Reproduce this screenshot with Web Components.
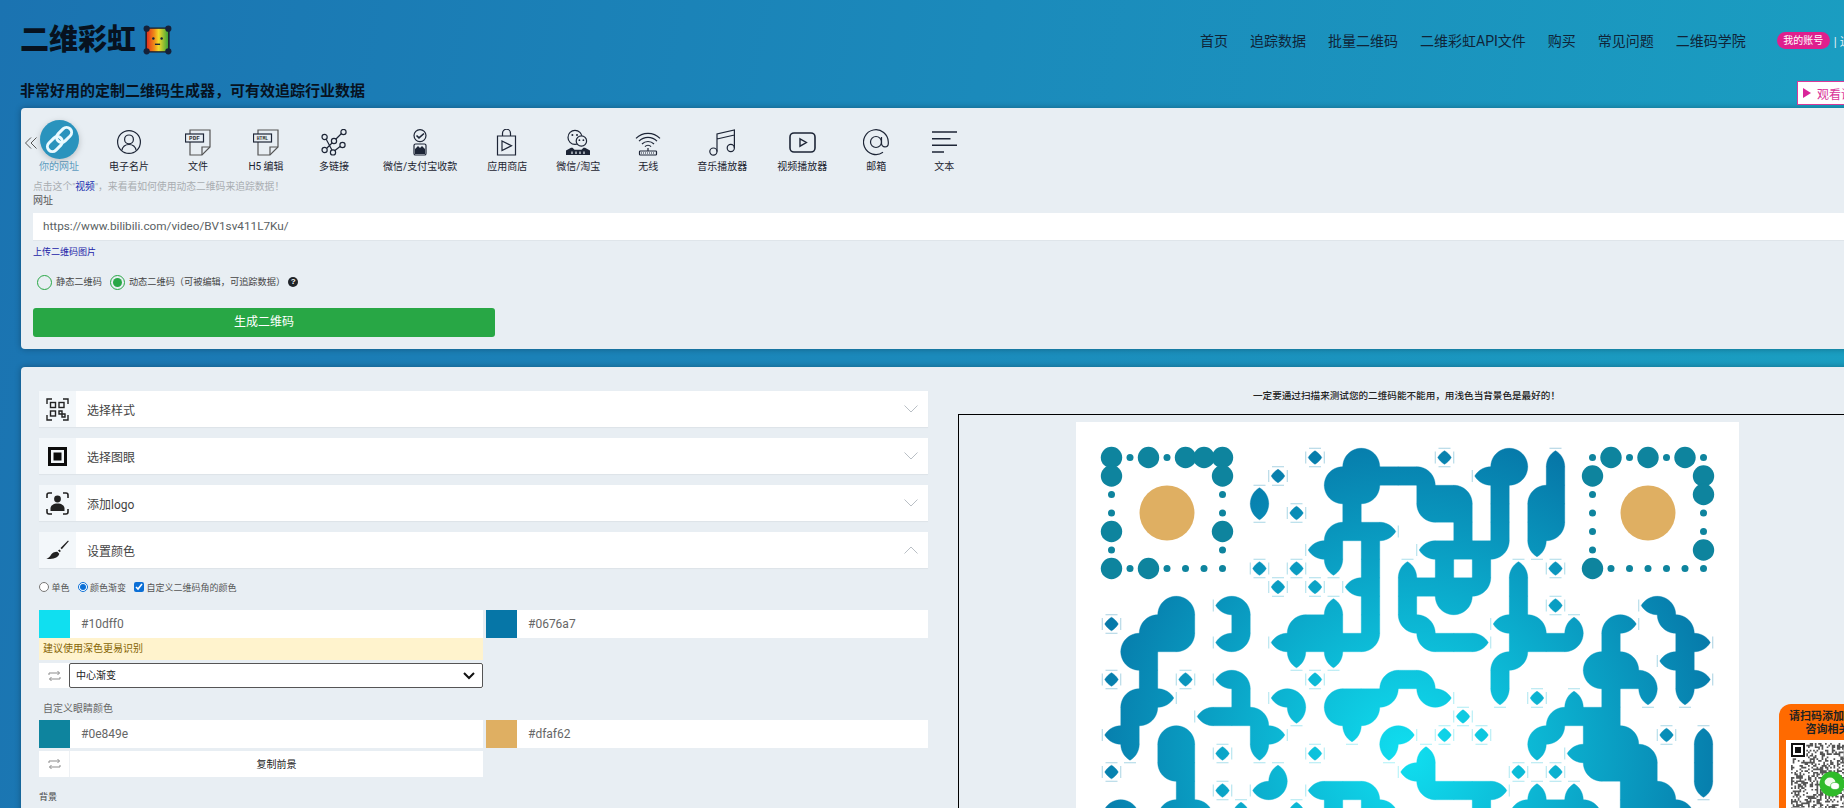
<!DOCTYPE html>
<html lang="zh">
<head>
<meta charset="utf-8">
<title>二维彩虹</title>
<style>
  html, body { margin: 0; height: 808px; overflow: hidden; }
  body {
    width: 1844px;
    font-family: Roboto, "Noto Sans CJK SC", sans-serif;
    background: linear-gradient(100deg, #1b73b1 0%, #1b8abb 50%, #1aa0c2 100%);
  }
</style>
</head>
<body>
<qr-page></qr-page>

<script>
const INK = "#1d2536";

// link type icons, in the order of the tab bar
const TAB_ICONS = {
  person: `<circle cx="13" cy="13" r="11.4"/><circle cx="13" cy="10.4" r="4.4"/><path d="M5.8 21.5c.8-3.8 3.4-6 7.2-6s6.4 2.2 7.2 6"/>`,
  pdf: `<path stroke="#555" d="M5 5V1h20v17l-8 8H5V13"/><path stroke="#555" d="M25 18h-8v8"/><rect x=".5" y="5" width="18" height="8" fill="#e8eef3"/><text x="9.5" y="11.2" font-size="6" font-weight="700" text-anchor="middle" fill="#333" stroke="none" font-family="Liberation Mono">PDF</text>`,
  html: `<path stroke="#555" d="M5 5V1h20v17l-8 8H5V13"/><path stroke="#555" d="M25 18h-8v8"/><rect x=".5" y="5" width="18" height="8" fill="#e8eef3"/><text x="9.5" y="11" font-size="4.8" font-weight="700" text-anchor="middle" fill="#333" stroke="none" font-family="Liberation Mono">HTML</text>`,
  graph: `<path d="M4 8l8 15M4 21l9-9 9-9M12 23l9-7"/><g fill="#e8eef3"><circle cx="22.5" cy="3" r="2.6"/><circle cx="21.5" cy="16" r="2.6"/><circle cx="13" cy="12" r="2.6"/><circle cx="3.6" cy="8" r="2.6"/><circle cx="3.6" cy="21" r="2.6"/><circle cx="12" cy="23.4" r="2.6"/></g>`,
  pay: `<circle cx="13" cy="6.6" r="6"/><path stroke-width="1.6" d="M9.5 6.5l2.5 2.4 5-4.4"/><rect x="7" y="15" width="12" height="11" rx="1.6"/><path fill="${INK}" stroke="none" d="M8 20l3-3 2 2 2-2 3 3v5H8z"/>`,
  store: `<path d="M3.5 7h18v19h-18zM8.5 7V4.2a4 4 0 0 1 8 0V7M8 12l9.5 4.8L8 21.5z"/>`,
  wechat: `<circle cx="10" cy="8.4" r="7"/><circle cx="16.4" cy="12" r="5.2" fill="#e8eef3"/><g fill="${INK}" stroke="none"><circle cx="7.4" cy="6" r="1"/><circle cx="12" cy="6" r="1"/><circle cx="14.4" cy="11.2" r=".9"/><circle cx="18.4" cy="11.2" r=".9"/><path d="M1 26v-4.6l5-2.6h1.5l2 2h7l2-2H20l5 2.6V26z"/></g><path stroke="#e8eef3" stroke-width="1.2" d="M7 25v-2.6M11 25v-2.6M15 25v-2.6M19 25v-2.6"/>`,
  wifi: `<path d="M1 9.4a17 17 0 0 1 24 0M4 12.2a12.6 12.6 0 0 1 18 0M7 15a8.4 8.4 0 0 1 12 0M10 17.6a4 4 0 0 1 6 0M13 19v3"/><rect x="4.5" y="22" width="17" height="4" rx=".8"/><path stroke-width="1" stroke-dasharray="1 1" d="M6 24h14"/>`,
  music: `<circle cx="4.4" cy="22.6" r="3.6"/><circle cx="21.8" cy="19" r="3.6"/><path d="M8 22.6V5L25.4 1v18M8 10L25.4 6"/>`,
  video: `<rect x="1" y="4" width="25" height="19" rx="4" stroke-width="1.6"/><path stroke-width="1.4" d="M11 9.8l6.4 3.7L11 17.2z"/>`,
  at: `<circle cx="13" cy="13" r="5.5"/><path d="M18.5 8v6.4a3.4 3.4 0 0 0 6.8 0V13A12.4 12.4 0 1 0 20 23.3"/>`,
  lines: `<path stroke-width="1.4" d="M1 3h25M1 9.7h18.5M1 16.3h25M1 23h12"/>`,
};

const TABS = [
  ["你的网址", "link"], ["电子名片", "person"], ["文件", "pdf"], ["H5 编辑", "html"],
  ["多链接", "graph"], ["微信/支付宝收款", "pay"], ["应用商店", "store"], ["微信/淘宝", "wechat"],
  ["无线", "wifi"], ["音乐播放器", "music"], ["视频播放器", "video"], ["邮箱", "at"], ["文本", "lines"],
];

class QrHeader extends HTMLElement {
  constructor() {
    super();
    this.attachShadow({ mode: "open" });
    const links = ["首页", "追踪数据", "批量二维码", "二维彩虹API文件", "购买", "常见问题", "二维码学院"];
    this.shadowRoot.innerHTML = `
      <style>
        :host { display: block; height: 108px; padding-left: 20px; color: #0d1b2a; }
        .top { display: flex; align-items: center; height: 80px; }
        .logo { font-size: 29px; font-weight: 900; letter-spacing: 0; color: #07121f; line-height: 1; }
        .bear { margin-left: 6px; }
        nav { display: flex; align-items: center; gap: 22px; position: absolute; left: 1200px; top: 32px; height: 17px; font-size: 14px; color: #0f2438; white-space: nowrap; }
        nav .link { margin-top: -2px; }
        .pill { margin-left: 9px; width: 53px; height: 17px; line-height: 17px; text-align: center; border-radius: 9px; background: #e01f8d; color: #fff; font-size: 10px; }
        .sep { margin-left: -18px; font-size: 12px; color: #e6f2f7; }
        h2 { margin: 0; font-size: 15px; line-height: 22px; font-weight: 700; color: #07121f; }
        .watch {
          position: absolute; left: 1797px; top: 81px; width: 90px; height: 24px; box-sizing: border-box;
          display: flex; align-items: center; gap: 6px; padding-left: 5px;
          background: #fff; border: 1px solid #d93a99; color: #d9349a; font-size: 12px;
        }
        .tri { width: 0; height: 0; border-left: 8px solid #d9259a; border-top: 5px solid transparent; border-bottom: 5px solid transparent; }
      </style>
      <div class="top">
        <span class="logo">二维彩虹</span>
        <svg class="bear" width="31" height="32" viewBox="0 0 30 31">
          <defs><linearGradient id="bear" x1="0" x2="1" y1="0" y2="0">
            <stop offset="0" stop-color="#e0261e"/><stop offset=".35" stop-color="#f08a18"/>
            <stop offset=".55" stop-color="#f3d92a"/><stop offset="1" stop-color="#2fa23a"/>
          </linearGradient></defs>
          <rect x="4" y="4" width="22" height="23" rx="2" fill="url(#bear)" stroke="#1d1a24" stroke-width="1.4"/>
          <g fill="#14213a"><circle cx="4.5" cy="4.5" r="3"/><circle cx="25.5" cy="4.5" r="3"/><circle cx="4.5" cy="26.5" r="3"/><circle cx="25.5" cy="26.5" r="3"/>
          <circle cx="11" cy="14" r="1.2"/><circle cx="19" cy="14" r="1.2"/><rect x="12.5" y="19" width="5" height="1.3"/></g>
        </svg>
        <nav>
          ${links.map((l) => `<span class="link">${l}</span>`).join("")}
          <span class="pill">我的账号</span><span class="sep">| 退出</span>
        </nav>
      </div>
      <h2>非常好用的定制二维码生成器，可有效追踪行业数据</h2>
      <div class="watch"><i class="tri"></i>观看讲解</div>
    `;
  }
}

class LinkTabs extends HTMLElement {
  constructor() {
    super();
    this.attachShadow({ mode: "open" });
    const renderIcon = (name) => {
      if (name === "link") {
        return `<svg class="active" width="39" height="39" viewBox="0 0 39 39"><circle cx="19.5" cy="19.5" r="19.5" fill="#2a93bd"/>
          <g transform="rotate(-45 19.5 19.5)" fill="none" stroke="#eafaff" stroke-width="3"><rect x="4.5" y="14.5" width="17" height="10" rx="5"/><rect x="17.5" y="14.5" width="17" height="10" rx="5"/></g></svg>`;
      }
      return `<svg width="27" height="27" viewBox="0 0 27 27" fill="none" stroke="${INK}" stroke-width="1.2">${TAB_ICONS[name]}</svg>`;
    };
    this.shadowRoot.innerHTML = `
      <style>
        :host { display: flex; position: relative; padding-left: 3px; height: 54px; }
        .tab { flex: none; min-width: 68px; padding: 0 15px; box-sizing: border-box; text-align: center; font-size: 10px; line-height: 14px; color: #1c2430; white-space: nowrap; }
        .tab.tight { padding: 0 14px; }
        .tab.on { color: #5d9cbf; }
        .ic { height: 39px; display: flex; align-items: center; justify-content: center; margin-bottom: 1px; }
        .tab:not(.on) .ic { padding-top: 5px; height: 34px; }
        .active { filter: drop-shadow(0 2px 3px rgba(0,0,0,.2)); }
        .back { position: absolute; left: 3px; top: 16px; }
      </style>
      ${TABS.map(([label, icon], i) => `<div class="tab ${i === 0 ? "on" : ""} ${icon === "wechat" ? "tight" : ""}"><div class="ic">${renderIcon(icon)}</div>${label}</div>`).join("")}
      <svg class="back" width="14" height="14" viewBox="0 0 14 14" fill="none" stroke="#555" stroke-width="1"><path d="M7 1.5L1.5 7 7 12.5M12.5 1.5L7 7l5.5 5.5"/></svg>
    `;
  }
}

class UrlForm extends HTMLElement {
  constructor() {
    super();
    this.attachShadow({ mode: "open" });
    this.shadowRoot.innerHTML = `
      <style>
        :host { display: block; padding-left: 12px; font-size: 10px; line-height: 14px; color: #555; }
        .hint { margin-top: 6px; font-size: 9.8px; color: #a9adb1; }
        .hint b { font-weight: 400; color: #1a2fb0; }
        .input { margin-top: 5px; height: 27px; line-height: 27px; padding-left: 10px; background: #fff; font-size: 11.75px; color: #5a5f63; box-shadow: 0 1px 0 #dfe5ea; }
        .upload { margin-top: 5px; font-size: 9px; color: #1b23a8; }
        .kinds { display: flex; align-items: center; margin-top: 15px; height: 16px; font-size: 9.2px; color: #444; }
        .radio { width: 15px; height: 15px; box-sizing: border-box; border: 1px solid #28a745; border-radius: 50%; margin: 0 4px 0 4px; display: flex; align-items: center; justify-content: center; }
        .radio.on::after { content: ""; width: 9px; height: 9px; border-radius: 50%; background: #28a745; }
        .second { margin-left: 8px; }
        .q { margin-left: 3px; width: 10px; height: 10px; border-radius: 50%; background: #1f2328; color: #fff; font: 700 8px/10px "Liberation Sans", sans-serif; text-align: center; }
        .go { margin-top: 18px; width: 462px; height: 29px; line-height: 29px; background: #28a745; border-radius: 3px; color: #fff; text-align: center; font-size: 12px; }
      </style>
      <div class="hint">点击这个"<b>视频</b>"，来看看如何使用动态二维码来追踪数据！</div>
      <div>网址</div>
      <div class="input">https://www.bilibili.com/video/BV1sv411L7Ku/</div>
      <div class="upload">上传二维码图片</div>
      <div class="kinds">
        <span class="radio"></span>静态二维码
        <span class="radio on second"></span>动态二维码（可被编辑，可追踪数据）<span class="q">?</span>
      </div>
      <div class="go">生成二维码</div>
    `;
  }
}

class AccordionItem extends HTMLElement {
  constructor() {
    super();
    this.attachShadow({ mode: "open" });
    const open = this.hasAttribute("open");
    this.shadowRoot.innerHTML = `
      <style>
        :host { display: flex; align-items: center; height: 36px; margin-bottom: 11px; background: #fff; font-size: 12px; color: #444; box-shadow: 0 1px 1px rgba(0,0,0,.04); }
        .ic { flex: none; width: 37px; height: 100%; display: flex; align-items: center; justify-content: center; background: #f3f7fa; }
        .t { flex: 1; padding-left: 11px; }
        svg { margin-right: 10px; }
      </style>
      <div class="ic"><slot name="icon"></slot></div>
      <div class="t">${this.getAttribute("label")}</div>
      <svg width="14" height="8" viewBox="0 0 14 8" fill="none" stroke="#b9bfc5" stroke-width="1"><path d="${open ? "M.5 7.5L7 1l6.5 6.5" : "M.5 .5L7 7l6.5-6.5"}"/></svg>
    `;
  }
}

class ColorRow extends HTMLElement {
  constructor() {
    super();
    this.attachShadow({ mode: "open" });
    const swatch = this.getAttribute("value");
    this.shadowRoot.innerHTML = `
      <style>
        :host { display: flex; height: 28px; background: #fff; font-size: 12px; color: #666; }
        i { flex: none; width: 31px; background: ${swatch}; }
        span { padding-left: 11px; line-height: 29px; }
      </style>
      <i></i><span>${swatch}</span>
    `;
  }
}

class SwapRow extends HTMLElement {
  constructor() {
    super();
    this.attachShadow({ mode: "open" });
    this.shadowRoot.innerHTML = `
      <style>
        :host { display: flex; width: 444px; background: #fff; font-size: 10px; color: #222; }
        .ic { flex: none; width: 30px; display: flex; align-items: center; justify-content: center; }
        .body { flex: 1; min-width: 0; }
      </style>
      <div class="ic"><svg width="13" height="12" viewBox="0 0 13 12" fill="none" stroke="#8d8d8d" stroke-width="1"><path d="M1 5V3h10.5M9.5 1l2 2-2 2M12 7v2H1.5M3.5 7l-2 2 2 2"/></svg></div>
      <div class="body"><slot></slot></div>
    `;
  }
}

class ColorPanel extends HTMLElement {
  constructor() {
    super();
    this.attachShadow({ mode: "open" });
    this.shadowRoot.innerHTML = `
      <style>
        :host { display: block; padding-top: 2px; font-size: 9px; color: #555; }
        .modes { display: flex; align-items: center; height: 12px; }
        label { display: flex; align-items: center; margin-right: 8px; }
        input { width: 10px; height: 10px; margin: 0 2.5px 0 0; accent-color: #0b6fd6; }
        .pair { display: grid; grid-template-columns: 444px 442px; column-gap: 3px; }
        .first { margin-top: 17px; }
        .warn { width: 444px; box-sizing: border-box; height: 22px; line-height: 22px; padding-left: 4px; background: #fff3cd; color: #856404; font-size: 10px; }
        .sel { position: relative; height: 25px; border: 1px solid #555; border-radius: 2px; box-sizing: border-box; line-height: 24px; padding-left: 6px; color: #222; }
        .sel svg { position: absolute; right: 7px; top: 8px; }
        .cap { margin-top: 14px; height: 18px; line-height: 14px; padding-left: 4px; font-size: 10px; color: #666; }
        .copy { height: 26px; line-height: 27px; text-align: center; border-left: 1px solid #eef1f4; }
        .spaced { margin-top: 3px; }
        .bg { margin-top: 13px; font-size: 9px; color: #444; }
      </style>
      <div class="modes">
        <label><input type="radio" name="m">单色</label>
        <label><input type="radio" name="m" checked>颜色渐变</label>
        <label><input type="checkbox" checked>自定义二维码角的颜色</label>
      </div>
      <div class="pair first"><color-row value="#10dff0"></color-row><color-row value="#0676a7"></color-row></div>
      <div class="warn">建议使用深色更易识别</div>
      <swap-row class="spaced"><div class="sel">中心渐变<svg width="12" height="8" viewBox="0 0 12 8" fill="none" stroke="#111" stroke-width="2"><path d="M1 1l5 5 5-5"/></svg></div></swap-row>
      <div class="cap">自定义眼睛颜色</div>
      <div class="pair"><color-row value="#0e849e"></color-row><color-row value="#dfaf62"></color-row></div>
      <swap-row class="spaced"><div class="copy">复制前景</div></swap-row>
      <div class="bg">背景</div>
    `;
  }
}

// rows of dark modules that are visible above the fold, eyes excluded
const QR_ROWS = [
  [11, 13, 14, 18, 21, 22, 24],
  [9, 12, 13, 14, 15, 16, 17, 20, 21, 22, 24],
  [8, 12, 13, 14, 17, 18, 19, 21, 23, 24],
  [8, 10, 13, 17, 18, 19, 21, 23, 24],
  [12, 13, 14, 15, 19, 21, 23, 24],
  [11, 12, 14, 17, 18, 19, 20, 21, 23],
  [8, 10, 12, 14, 16, 18, 20, 22, 24],
  [9, 11, 13, 14, 16, 17, 18, 19, 20, 22],
  [3, 4, 6, 7, 12, 14, 16, 18, 19, 22, 24, 29, 30],
  [0, 2, 3, 4, 7, 10, 11, 12, 14, 16, 17, 21, 22, 23, 25, 27, 28, 30, 31],
  [1, 2, 3, 4, 6, 7, 9, 10, 11, 12, 13, 14, 17, 18, 19, 20, 22, 23, 24, 25, 27, 31, 32],
  [1, 2, 10, 12, 21, 22, 26, 27, 28, 30, 31],
  [0, 2, 4, 6, 7, 11, 15, 16, 17, 21, 26, 27, 28, 29, 31, 32],
  [1, 2, 3, 7, 9, 10, 12, 13, 14, 15, 17, 18, 21, 23, 25, 27, 29, 31],
  [1, 2, 5, 6, 7, 8, 10, 12, 13, 14, 19, 24, 25, 26, 27],
  [0, 1, 3, 4, 8, 9, 13, 15, 16, 18, 20, 23, 24, 26, 27, 28, 30, 32],
  [1, 3, 4, 6, 8, 11, 15, 17, 23, 25, 26, 27, 28, 29, 32],
  [0, 3, 4, 9, 16, 17, 22, 24, 26, 27, 28, 29, 32],
  [4, 6, 8, 9, 11, 12, 13, 14, 17, 18, 19, 20, 21, 23, 25, 28, 29, 30, 32],
  [0, 1, 3, 4, 5, 7, 10, 12, 14, 15, 20, 22, 23, 24, 25, 26, 28, 29, 30, 31],
];

// B big dot, s small dot, for each side of the two eyes on screen
const EYES = [
  { x: 0, top: "BsBsBBB", left: "BBssBsB", right: "BBssBss", bottom: "BsBssss" },
  { x: 26, top: "sBsBsBs", left: "sBssssB", right: "sBBssBs", bottom: "Bssssss" },
];

const MODULE = 18.5;
const QR_MARGIN = 26.25;

class QrPreview extends HTMLElement {
  constructor() {
    super();
    this.attachShadow({ mode: "open" });
    this.shadowRoot.innerHTML = `
      <style>
        :host { display: block; }
        .note { height: 23px; line-height: 10px; font-size: 9.6px; font-weight: 500; text-align: center; color: #222; padding-right: 2px; }
        .frame { border: 1px solid #000; padding: 7px 0 0; }
        svg { display: block; margin: 0 auto; background: #fff; }
      </style>
      <div class="note">一定要通过扫描来测试您的二维码能不能用，用浅色当背景色是最好的！</div>
      <div class="frame">${this.renderCode()}</div>
    `;
  }

  renderCode() {
    const on = (c, r) => (QR_ROWS[r] || []).includes(c);
    const h = MODULE / 2;
    let shapes = "";
    let ticks = "";
    QR_ROWS.forEach((cols, r) => {
      cols.forEach((c) => {
        const cx = QR_MARGIN + c * MODULE + h;
        const cy = QR_MARGIN + r * MODULE + h;
        const up = on(c, r - 1);
        const down = on(c, r + 1) || r === QR_ROWS.length - 1;
        const left = on(c - 1, r);
        const right = on(c + 1, r);
        // a free corner is cut by a circle of one module centred on the opposite corner
        const cuts = [];
        if (!up && !left) cuts.push([h, h]);
        if (!up && !right) cuts.push([-h, h]);
        if (!down && !left) cuts.push([h, -h]);
        if (!down && !right) cuts.push([-h, -h]);
        shapes += this.modulePath(cx, cy, h, cuts);
        const tick = (x1, y1, x2, y2) => { ticks += `M${cx + x1} ${cy + y1}L${cx + x2} ${cy + y2}`; };
        if (!up && !left && !right) tick(-6, -h, 6, -h);
        if (!down && !left && !right) tick(-6, h, 6, h);
        if (!left && !up && !down) tick(-h, -6, -h, 6);
        if (!right && !up && !down) tick(h, -6, h, 6);
      });
    });
    let eyes = "";
    EYES.forEach((eye) => {
      const dot = (c, r, kind) => {
        const x = QR_MARGIN + (eye.x + c) * MODULE + h;
        const y = QR_MARGIN + r * MODULE + h;
        eyes += `<circle cx="${x}" cy="${y}" r="${kind === "B" ? 10.7 : 3.5}"/>`;
      };
      [...eye.top].forEach((k, i) => dot(i, 0, k));
      [...eye.bottom].forEach((k, i) => dot(i, 6, k));
      [...eye.left].forEach((k, i) => { if (i > 0 && i < 6) dot(0, i, k); });
      [...eye.right].forEach((k, i) => { if (i > 0 && i < 6) dot(6, i, k); });
      eyes += `<circle fill="#dfaf62" r="27.5" cx="${QR_MARGIN + (eye.x + 3) * MODULE + h}" cy="${QR_MARGIN + 3 * MODULE + h}"/>`;
    });
    return `<svg width="663" height="663" viewBox="0 0 663 663">
      <defs><radialGradient id="qr" gradientUnits="userSpaceOnUse" cx="331.5" cy="331.5" r="335">
        <stop offset="0" stop-color="#10dff0"/><stop offset="1" stop-color="#0676a7"/>
      </radialGradient></defs>
      <path d="${ticks}" fill="none" stroke="url(#qr)" stroke-width="1" stroke-opacity=".35"/>
      <path d="${shapes}" fill="url(#qr)" stroke="url(#qr)" stroke-width=".35"/>
      <g fill="#0e849e">${eyes}</g>
    </svg>`;
  }

  modulePath(cx, cy, h, cuts) {
    const points = [];
    for (let i = 0; i < 64; i++) {
      const a = (i / 64) * Math.PI * 2;
      const ux = Math.cos(a);
      const uy = Math.sin(a);
      let t = Math.min(h / Math.max(Math.abs(ux), 1e-6), h / Math.max(Math.abs(uy), 1e-6));
      cuts.forEach(([ox, oy]) => {
        const d = ux * ox + uy * oy;
        t = Math.min(t, d + Math.sqrt(d * d - (ox * ox + oy * oy) + 4 * h * h));
      });
      points.push(`${(cx + ux * t).toFixed(2)} ${(cy + uy * t).toFixed(2)}`);
    }
    return `M${points.join("L")}Z`;
  }
}

class ContactWidget extends HTMLElement {
  constructor() {
    super();
    this.attachShadow({ mode: "open" });
    // a scatter of small modules, the real code is too small to read anyway
    let seed = 7;
    let dots = "";
    for (let y = 0; y < 56; y++) {
      for (let x = 0; x < 34; x++) {
        seed = (seed * 16807) % 2147483647;
        if (seed % 100 < 42 && !(x < 9 && y < 9)) dots += `M${x * 1.7} ${y * 1.7}h1.7v1.7h-1.7z`;
      }
    }
    this.shadowRoot.innerHTML = `
      <style>
        :host { position: absolute; left: 1779px; top: 704px; width: 119px; height: 160px; background: #ff6a00; border-radius: 12px 0 0 0; text-align: center; }
        .t { padding-top: 7px; font-size: 11px; line-height: 12.5px; font-weight: 700; color: #222; height: 29px; }
        .code { margin-left: 7px; background: #fff; height: 130px; width: 105px; padding: 3px 0 0 5px; box-sizing: border-box; }
        svg { display: block; }
        .chat { position: absolute; left: 40px; top: 67px; }
      </style>
      <div class="t">请扫码添加客服微信<br>咨询相关问题</div>
      <div class="code">
        <svg width="58" height="96" viewBox="0 0 58 96">
          <path d="${dots}" fill="#555"/>
          <rect x="1" y="1" width="12" height="12" fill="none" stroke="#111" stroke-width="2"/>
          <rect x="4" y="4" width="6" height="6" fill="#111"/>
        </svg>
      </div>
      <svg class="chat" width="26" height="26" viewBox="0 0 26 26">
        <circle cx="13" cy="13" r="12.5" fill="#2fbb2a"/>
        <ellipse cx="11" cy="11" rx="5.4" ry="4.4" fill="#eefbea"/><ellipse cx="16" cy="15" rx="4.4" ry="3.6" fill="#fff" stroke="#2fbb2a" stroke-width=".6"/>
      </svg>
    `;
  }
}

class QrPage extends HTMLElement {
  constructor() {
    super();
    this.attachShadow({ mode: "open" });
    const card = `background: #e8eef3; border-radius: 4px; box-shadow: 0 0 6px rgba(0,0,0,.3);`;
    this.shadowRoot.innerHTML = `
      <style>
        :host { display: block; width: 1900px; height: 808px; overflow: hidden; position: relative; }
        .link-card { ${card} margin-left: 21px; padding: 12px 0 0; height: 241px; box-sizing: border-box; }
        .main-card { ${card} margin: 18px 0 0 21px; padding: 24px 0 0 18px; height: 500px; box-sizing: border-box; display: grid; grid-template-columns: 889px 899px; column-gap: 30px; }
        svg.i { display: block; }
      </style>
      <qr-header></qr-header>
      <section class="link-card">
        <link-tabs></link-tabs>
        <url-form></url-form>
      </section>
      <section class="main-card">
        <div>
          <accordion-item label="选择样式">
            <svg class="i" slot="icon" width="23" height="23" viewBox="0 0 23 23" fill="none" stroke="#222" stroke-width="1.4"><path d="M1 6V1h5M17 1h5v5M22 17v5h-5M6 22H1v-5"/><rect x="4.5" y="4.5" width="5" height="5"/><rect x="13" y="4.5" width="5" height="5"/><rect x="4.5" y="13" width="5" height="5"/><path d="M13 13h3v3h3v3h-3v-3h-3z"/></svg>
          </accordion-item>
          <accordion-item label="选择图眼">
            <svg class="i" slot="icon" width="19" height="19" viewBox="0 0 19 19"><path fill-rule="evenodd" fill="#0c0c0c" d="M0 0h19v19H0zM3 3v13h13V3z"/><rect x="5.5" y="5.5" width="8" height="8" fill="#0c0c0c"/></svg>
          </accordion-item>
          <accordion-item label="添加logo">
            <svg class="i" slot="icon" width="23" height="23" viewBox="0 0 23 23" fill="none" stroke="#222" stroke-width="1.6"><path d="M1 6V3a2 2 0 0 1 2-2h3M17 1h3a2 2 0 0 1 2 2v3M22 17v3a2 2 0 0 1-2 2h-3M6 22H3a2 2 0 0 1-2-2v-3"/><circle cx="11.5" cy="7" r="3.4" fill="#222" stroke="none"/><path fill="#222" stroke="none" d="M4.5 19v-2.5c0-3 3-5 7-5s7 2 7 5V19z"/></svg>
          </accordion-item>
          <accordion-item label="设置颜色" open>
            <svg class="i" slot="icon" width="23" height="20" viewBox="0 0 23 20"><path fill="#222" d="M22 .5l.8.8-7 8-1.3-1.3zM13.4 9.4l1.5 1.5-1.2 1.4-1.7-1.7zM11.3 11.7l2 2c-1 3.2-4 5-9.3 5.3H.4c2.6-1.2 3.7-2.6 4.6-4.2 1.4-2 3.4-3.2 6.3-3.1z"/></svg>
          </accordion-item>
          <color-panel></color-panel>
        </div>
        <qr-preview></qr-preview>
      </section>
      <contact-widget></contact-widget>
    `;
  }
}

customElements.define("qr-header", QrHeader);
customElements.define("link-tabs", LinkTabs);
customElements.define("url-form", UrlForm);
customElements.define("accordion-item", AccordionItem);
customElements.define("color-row", ColorRow);
customElements.define("swap-row", SwapRow);
customElements.define("color-panel", ColorPanel);
customElements.define("qr-preview", QrPreview);
customElements.define("contact-widget", ContactWidget);
customElements.define("qr-page", QrPage);
</script>
</body>
</html>
